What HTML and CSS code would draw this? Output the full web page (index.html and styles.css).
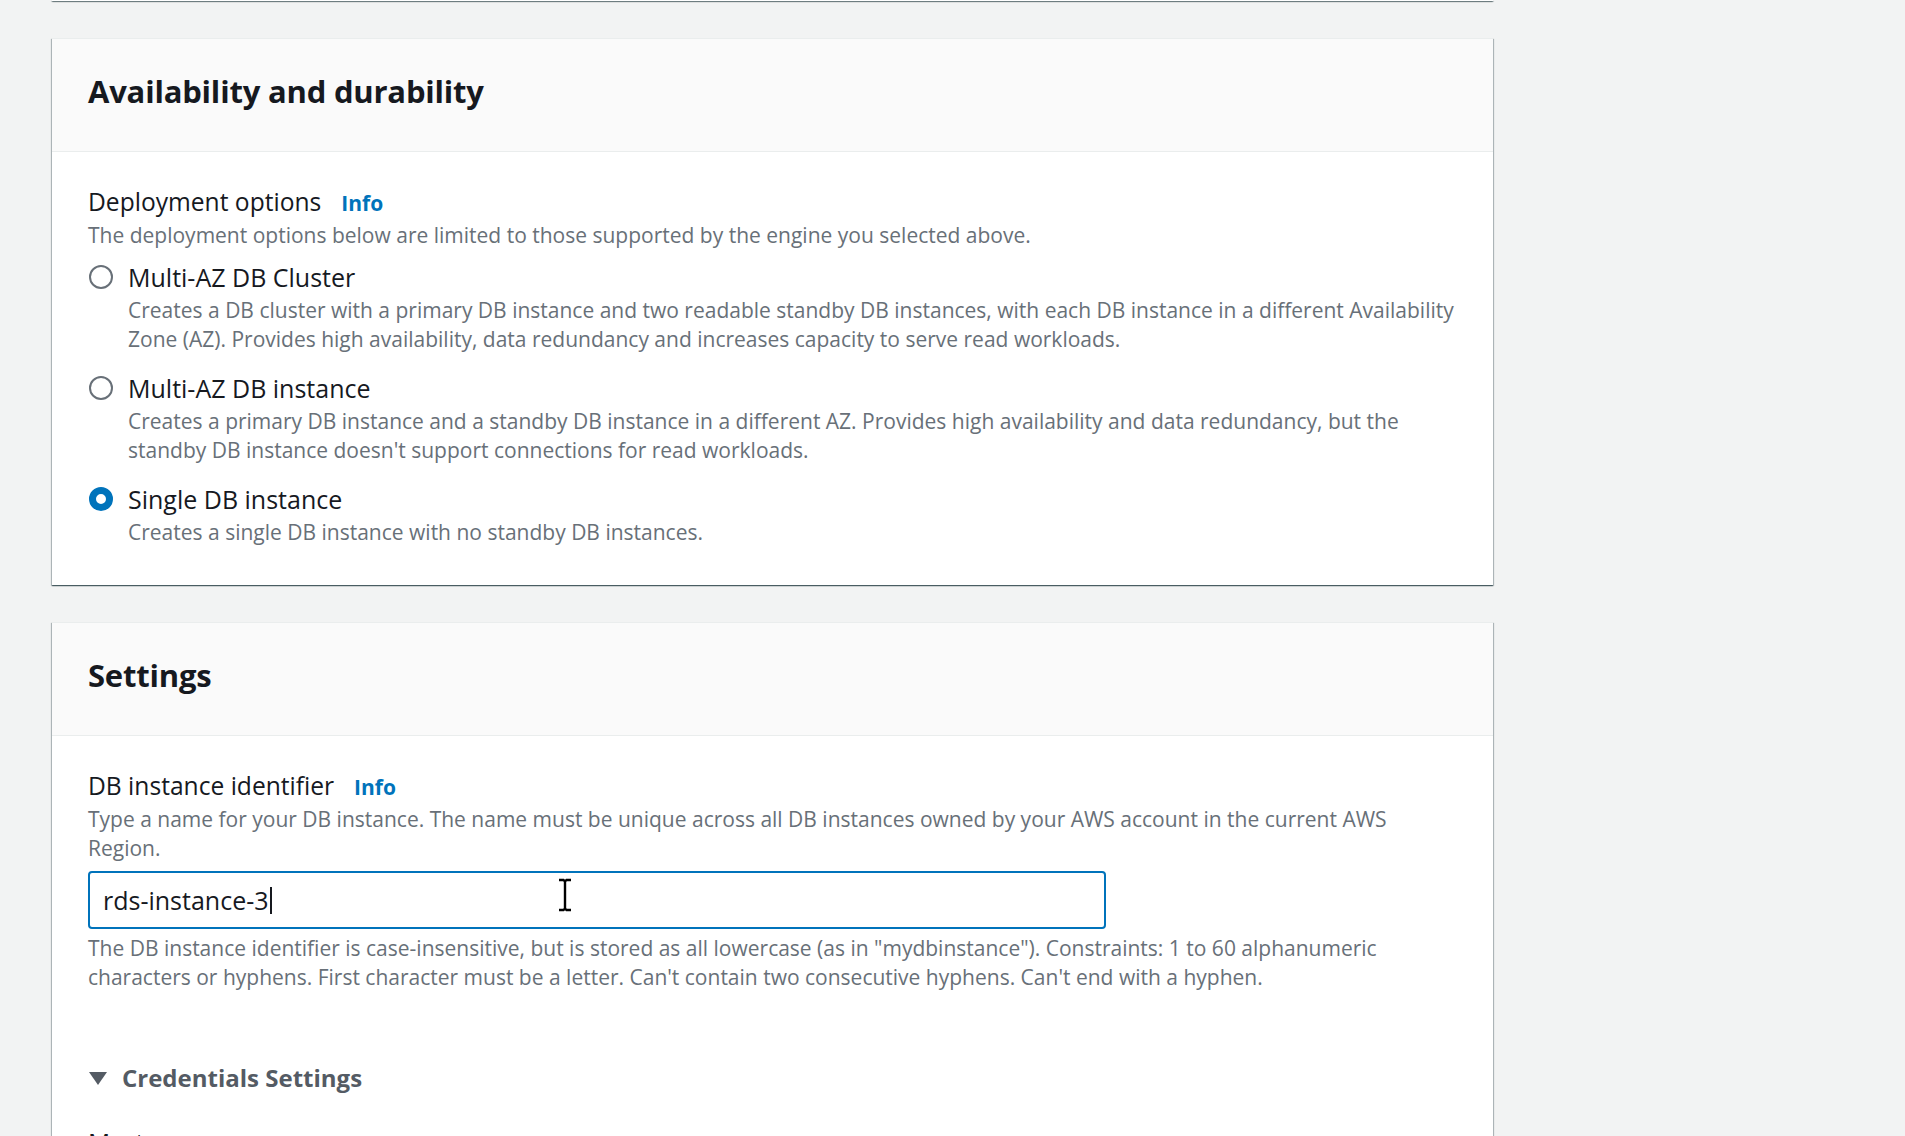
FILE: index.html
```html
<!DOCTYPE html>
<html lang="en">
<head>
<meta charset="utf-8">
<title>Create database</title>
<link rel="stylesheet" href="styles.css">
</head>
<body>
<main class="page">
  <div class="card-tail"></div>

  <section class="card">
    <header class="card-header"><h2>Availability and durability</h2></header>
    <div class="card-body">
      <div class="field-label"><span>Deployment options</span><a class="info">Info</a></div>
      <p class="field-desc">The deployment options below are limited to those supported by the engine you selected above.</p>
      <div class="radio-group">
        <div class="radio-option">
          <span class="radio"></span>
          <div class="radio-text">
            <div class="radio-label">Multi-AZ DB Cluster</div>
            <div class="radio-desc">Creates a DB cluster with a primary DB instance and two readable standby DB instances, with each DB instance in a different Availability<br>Zone (AZ). Provides high availability, data redundancy and increases capacity to serve read workloads.</div>
          </div>
        </div>
        <div class="radio-option">
          <span class="radio"></span>
          <div class="radio-text">
            <div class="radio-label">Multi-AZ DB instance</div>
            <div class="radio-desc">Creates a primary DB instance and a standby DB instance in a different AZ. Provides high availability and data redundancy, but the<br>standby DB instance doesn't support connections for read workloads.</div>
          </div>
        </div>
        <div class="radio-option">
          <span class="radio checked"></span>
          <div class="radio-text">
            <div class="radio-label">Single DB instance</div>
            <div class="radio-desc">Creates a single DB instance with no standby DB instances.</div>
          </div>
        </div>
      </div>
    </div>
  </section>

  <section class="card">
    <header class="card-header"><h2>Settings</h2></header>
    <div class="card-body">
      <div class="field-label"><span>DB instance identifier</span><a class="info">Info</a></div>
      <p class="field-desc">Type a name for your DB instance. The name must be unique across all DB instances owned by your AWS account in the current AWS<br>Region.</p>
      <div class="input">
        <span class="input-value">rds-instance-3</span><span class="caret"></span>
        <svg class="ibeam" width="16" height="34" viewBox="0 0 16 34" aria-hidden="true">
          <path d="M2 2h4.5l1.5 1.5L9.5 2H14M8 3.5v27M2 32h4.5L8 30.5 9.5 32H14" fill="none" stroke="#000" stroke-width="2.4"/>
        </svg>
      </div>
      <p class="field-help">The DB instance identifier is case-insensitive, but is stored as all lowercase (as in "mydbinstance"). Constraints: 1 to 60 alphanumeric<br>characters or hyphens. First character must be a letter. Can't contain two consecutive hyphens. Can't end with a hyphen.</p>

      <div class="expander">
        <svg class="caret-down" width="20" height="16" viewBox="0 0 20 16" aria-hidden="true"><polygon points="1,2 19,2 10,15" fill="#545b64"/></svg>
        <span>Credentials Settings</span>
      </div>
      <div class="field-label sub"><span>Master username</span><a class="info">Info</a></div>
    </div>
  </section>
</main>
</body>
</html>
```

FILE: styles.css
```css
html, body {
  margin: 0;
  padding: 0;
}
body {
  background: #f2f3f3;
  font-family: "Open Sans", "Noto Sans", sans-serif;
  color: #16191f;
  overflow: hidden;
  height: 1136px;
}
.page {
  width: 1441px;
  padding-left: 52px;
  display: flex;
  flex-direction: column;
}
.card-tail {
  height: 1px;
  background: #fff;
  box-shadow: 0 1px 1px 0 rgba(0, 28, 36, .45), 1px 1px 1px 0 rgba(0, 28, 36, .2), -1px 1px 1px 0 rgba(0, 28, 36, .2);
  margin-bottom: 37px;
}
.card {
  background: #fff;
  box-shadow: 0 1px 1px 0 rgba(0, 28, 36, .5), 1px 1px 1px 0 rgba(0, 28, 36, .22), -1px 1px 1px 0 rgba(0, 28, 36, .22);
  border-top: 1px solid #eaeded;
  margin-bottom: 37px;
}
.card-header {
  background: #fafafa;
  border-bottom: 1px solid #eaeded;
  padding: 28px 36px 36px;
  height: 48px;
  display: flex;
  align-items: center;
}
.card-header h2 {
  margin: 0;
  font-size: 31px;
  line-height: 40px;
  font-weight: 700;
  letter-spacing: -0.2px;
  color: #16191f;
}
.card-body {
  padding: 34px 36px 38px;
}
.field-label {
  display: flex;
  align-items: baseline;
  gap: 20px;
  font-size: 24.6px;
  line-height: 32px;
  color: #16191f;
}
.info {
  font-size: 21px;
  font-weight: 700;
  color: #0073bb;
}
.field-desc, .field-help {
  margin: 2px 0 0;
  font-size: 21px;
  line-height: 29px;
  color: #687078;
}
.radio-group {
  margin-top: 11px;
  display: flex;
  flex-direction: column;
  gap: 18px;
}
.radio-option {
  display: flex;
  gap: 15px;
}
.radio {
  flex: none;
  box-sizing: border-box;
  width: 24px;
  height: 24px;
  margin-top: 4px;
  margin-left: 1px;
  border: 2px solid #687078;
  border-radius: 50%;
  background: #fff;
}
.radio.checked {
  border: 7.5px solid #0073bb;
}
.radio-label {
  font-size: 25px;
  line-height: 32px;
  color: #16191f;
}
.radio-desc {
  margin-top: 3px;
  font-size: 21px;
  line-height: 29px;
  color: #687078;
}
.input {
  position: relative;
  margin-top: 8px;
  box-sizing: border-box;
  width: 1018px;
  height: 58px;
  border: 2px solid #0073bb;
  border-radius: 4px;
  padding: 0 13px;
  display: flex;
  align-items: center;
  font-size: 25px;
  color: #16191f;
}
.caret {
  width: 2px;
  height: 27px;
  background: #16191f;
  margin-left: 1px;
}
.ibeam {
  position: absolute;
  left: 467px;
  top: 5px;
}
.field-help {
  margin-top: 5px;
}
.expander {
  margin-top: 69px;
  display: flex;
  align-items: center;
  gap: 14px;
  font-size: 24px;
  line-height: 34px;
  font-weight: 700;
  color: #545b64;
}
.field-label.sub {
  margin-top: 32px;
}
```
